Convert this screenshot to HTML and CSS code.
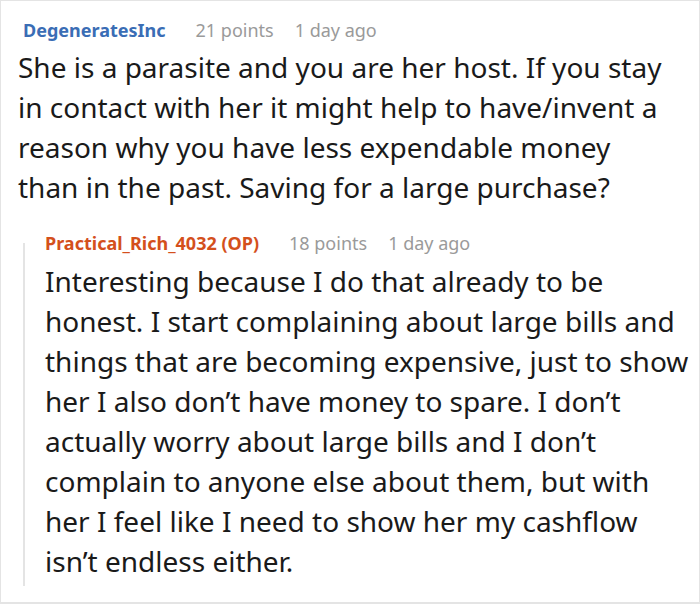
FILE: index.html
```html
<!DOCTYPE html>
<html>
<head>
<meta charset="utf-8">
<link rel="stylesheet" href="styles.css">
</head>
<body>
<div class="card">
  <div class="comment">
    <div class="meta">
      <span class="author">DegeneratesInc</span>
      <span class="info points">21 points</span>
      <span class="info time">1 day ago</span>
    </div>
    <p class="body parent-body">She is a parasite and you are her host. If you stay in contact with her it might help to have/invent a reason why you have less expendable money than in the past. Saving for a large purchase?</p>
    <div class="reply">
      <div class="meta">
        <span class="author op">Practical_Rich_4032 (OP)</span>
        <span class="info points">18 points</span>
        <span class="info time">1 day ago</span>
      </div>
      <p class="body">Interesting because I do that already to be honest. I start complaining about large bills and things that are becoming expensive, just to show her I also don’t have money to spare. I don’t actually worry about large bills and I don’t complain to anyone else about them, but with her I feel like I need to show her my cashflow isn’t endless either.</p>
    </div>
  </div>
</div>
</body>
</html>
```

FILE: styles.css
```css
html, body {
  margin: 0;
  padding: 0;
  background: #fff;
}
body {
  font-family: "Noto Sans", "Open Sans", sans-serif;
  color: #1a1a1a;
}
.card {
  box-sizing: border-box;
  width: 700px;
  height: 604px;
  border: 1px solid #e4e4e4;
  border-bottom-width: 2px;
  overflow: hidden;
}
.comment {
  padding: 17px 6px 0 17px;
}
.meta {
  display: flex;
  align-items: baseline;
  padding-left: 5px;
  font-size: 18px;
  line-height: 24px;
}
.author {
  font-weight: 700;
  color: #3a6db5;
}
.author.op {
  color: #d4501c;
}
.info {
  color: #9a9a9a;
}
.points {
  margin-left: 30px;
}
.time {
  margin-left: 21px;
}
.body {
  margin: 5px 0 0 0;
  font-size: 28px;
  line-height: 40px;
}
.parent-body {
  margin-right: 23px;
}
.reply {
  position: relative;
  margin: 24px 0 0 5px;
  padding: 0 0 0 22px;
}
.reply::before {
  content: "";
  position: absolute;
  left: 0;
  top: 12px;
  bottom: -5px;
  width: 2px;
  background: #e4e4e4;
}
.reply .meta {
  padding-left: 0;
}
.reply .body {
  margin-top: 6px;
}
```
